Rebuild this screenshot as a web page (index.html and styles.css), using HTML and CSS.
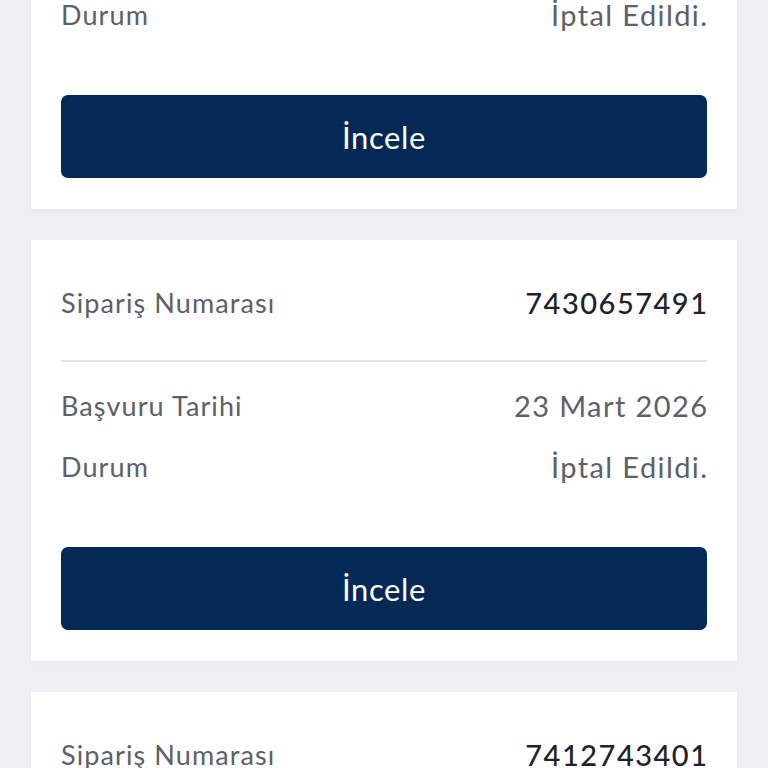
FILE: index.html
```html
<!DOCTYPE html>
<html lang="tr">
<head>
<meta charset="utf-8">
<title>Siparişler</title>
<link rel="stylesheet" href="styles.css">
</head>
<body>
<div class="list">
  <section class="card">
    <div class="row row-head"><span class="label">Sipariş Numarası</span><span class="num">7451208836</span></div>
    <hr class="divider">
    <div class="row"><span class="label">Başvuru Tarihi</span><span class="value">24 Mart 2026</span></div>
    <div class="row"><span class="label">Durum</span><span class="value">İptal Edildi.</span></div>
    <button class="btn">İncele</button>
  </section>
  <section class="card">
    <div class="row row-head"><span class="label">Sipariş Numarası</span><span class="num">7430657491</span></div>
    <hr class="divider">
    <div class="row"><span class="label">Başvuru Tarihi</span><span class="value">23 Mart 2026</span></div>
    <div class="row"><span class="label">Durum</span><span class="value">İptal Edildi.</span></div>
    <button class="btn">İncele</button>
  </section>
  <section class="card">
    <div class="row row-head"><span class="label">Sipariş Numarası</span><span class="num">7412743401</span></div>
    <hr class="divider">
    <div class="row"><span class="label">Başvuru Tarihi</span><span class="value">22 Mart 2026</span></div>
    <div class="row"><span class="label">Durum</span><span class="value">İptal Edildi.</span></div>
    <button class="btn">İncele</button>
  </section>
</div>
</body>
</html>
```
FILE: styles.css
```css
html, body {
  margin: 0;
  padding: 0;
  background: #eff0f4;
  font-family: Lato, "Open Sans", sans-serif;
  overflow: hidden;
}
.list {
  display: flex;
  flex-direction: column;
  gap: 31px;
  padding: 0 31px;
  margin-top: -212px;
}
.card {
  background: #ffffff;
  padding: 30px 30px 31px;
  box-shadow: 0 2px 4px rgba(0, 0, 0, 0.04);
  display: flex;
  flex-direction: column;
}
.row {
  display: flex;
  justify-content: space-between;
  align-items: center;
  height: 61px;
}
.row-head {
  height: 64px;
}
.label {
  font-size: 27px;
  color: #5c6068;
  letter-spacing: 1.1px;
}
.value {
  font-size: 29px;
  color: #5c6068;
  letter-spacing: 1.4px;
  margin-right: -1.4px;
}
.num {
  font-size: 29px;
  font-weight: 500;
  color: #1e222c;
  letter-spacing: 1.5px;
  margin-right: -1.5px;
}
.divider {
  border: 0;
  height: 2px;
  background: #e4e6e9;
  margin: 26px 0 13px;
}
.btn {
  margin-top: 50px;
  height: 83px;
  border: 0;
  border-radius: 7px;
  background: #032a57;
  color: #ffffff;
  font-family: Lato, "Open Sans", sans-serif;
  font-size: 31px;
  letter-spacing: 0.6px;
  padding: 0;
}
```
